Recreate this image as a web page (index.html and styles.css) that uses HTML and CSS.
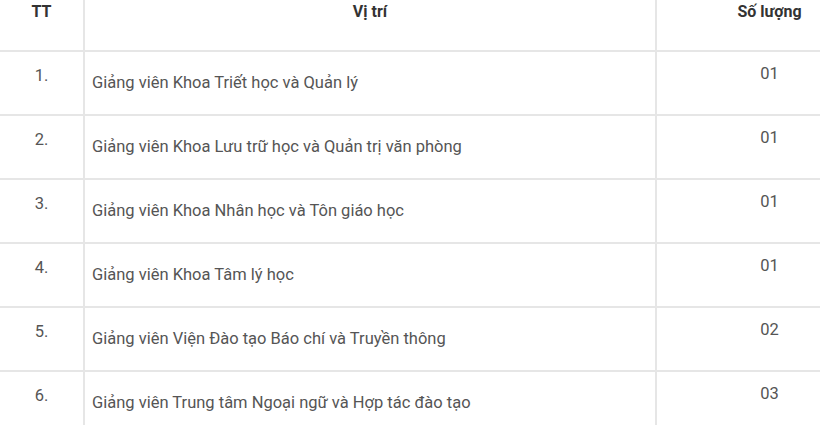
FILE: index.html
```html
<!DOCTYPE html>
<html>
<head>
<meta charset="utf-8">
<link rel="stylesheet" href="styles.css">
</head>
<body>
<table class="jobs">
  <thead>
    <tr>
      <th class="c-tt">TT</th>
      <th class="c-pos">Vị trí</th>
      <th class="c-qty">Số lượng</th>
    </tr>
  </thead>
  <tbody>
    <tr><td class="c-tt">1.</td><td class="c-pos">Giảng viên Khoa Triết học và Quản lý</td><td class="c-qty">01</td></tr>
    <tr><td class="c-tt">2.</td><td class="c-pos">Giảng viên Khoa Lưu trữ học và Quản trị văn phòng</td><td class="c-qty">01</td></tr>
    <tr><td class="c-tt">3.</td><td class="c-pos">Giảng viên Khoa Nhân học và Tôn giáo học</td><td class="c-qty">01</td></tr>
    <tr><td class="c-tt">4.</td><td class="c-pos">Giảng viên Khoa Tâm lý học</td><td class="c-qty">01</td></tr>
    <tr><td class="c-tt">5.</td><td class="c-pos">Giảng viên Viện Đào tạo Báo chí và Truyền thông</td><td class="c-qty">02</td></tr>
    <tr><td class="c-tt">6.</td><td class="c-pos">Giảng viên Trung tâm Ngoại ngữ và Hợp tác đào tạo</td><td class="c-qty">03</td></tr>
  </tbody>
</table>
</body>
</html>
```

FILE: styles.css
```css
html, body {
  margin: 0;
  padding: 0;
  background: #fff;
  overflow: hidden;
}

body {
  font-family: Roboto, "Noto Sans", sans-serif;
  font-size: 16.5px;
  line-height: 20px;
  color: #555;
}

.jobs {
  border-collapse: collapse;
  table-layout: fixed;
  width: 882px;
}

.jobs th,
.jobs td {
  border: 2px solid #e6e6e6;
  vertical-align: top;
  padding: 0;
}

.jobs tr:first-child th { border-top: none; }
.jobs th:first-child,
.jobs td:first-child { border-left: none; }
.jobs th:last-child,
.jobs td:last-child { border-right: none; }

.jobs th {
  height: 51px;
  box-sizing: border-box;
  padding-top: 2px;
  font-size: 16px;
  font-weight: 700;
  color: #333;
  text-align: center;
}

.jobs td {
  height: 64px;
  box-sizing: border-box;
}

.c-tt { width: 84px; }
.c-qty { width: 226px; }

.jobs td.c-tt {
  text-align: center;
  padding-top: 14px;
}

.jobs td.c-pos {
  text-align: left;
  padding: 21px 7px 0;
}

.jobs td.c-qty {
  text-align: center;
  padding-top: 12px;
}
```
